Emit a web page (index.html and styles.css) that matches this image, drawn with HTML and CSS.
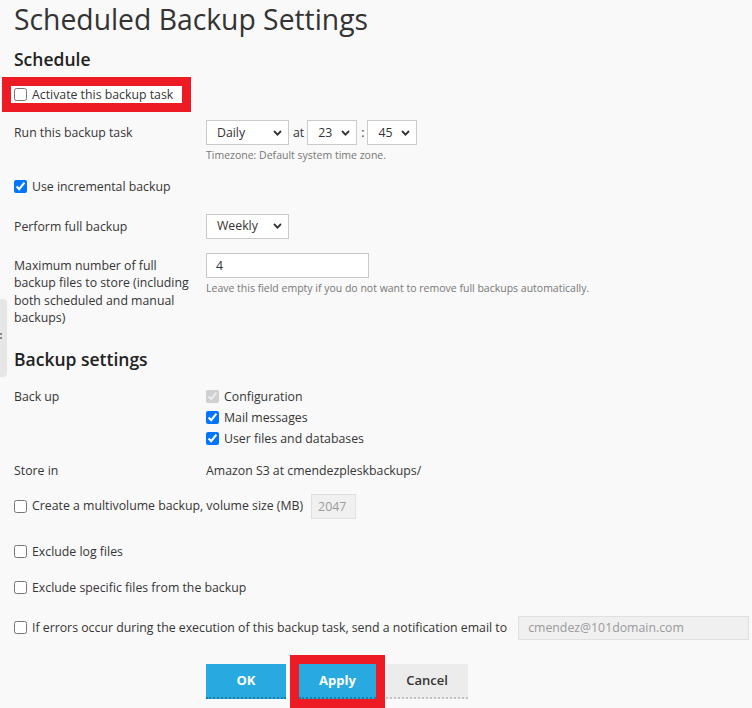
FILE: index.html
```html
<!DOCTYPE html>
<html>
<head>
<meta charset="utf-8">
<link rel="stylesheet" href="styles.css">
</head>
<body>
<div class="sidetab"><span class="dots"></span></div>
<h1 class="title">Scheduled Backup Settings</h1>

<h2 class="section">Schedule</h2>
<div class="activate-wrap">
  <label class="check activate"><input type="checkbox"><span>Activate this backup task</span></label>
</div>

<div class="row row-run">
  <div class="label pad">Run this backup task</div>
  <div class="field">
    <div class="inline">
      <span class="select w-daily"><span>Daily</span><svg width="9" height="6" viewBox="0 0 9 6"><path d="M1 1 L4.5 4.6 L8 1" fill="none" stroke="#333" stroke-width="1.8"/></svg></span>
      <span class="sep">at</span>
      <span class="select w-num"><span>23</span><svg width="9" height="6" viewBox="0 0 9 6"><path d="M1 1 L4.5 4.6 L8 1" fill="none" stroke="#333" stroke-width="1.8"/></svg></span>
      <span class="sep">:</span>
      <span class="select w-num"><span>45</span><svg width="9" height="6" viewBox="0 0 9 6"><path d="M1 1 L4.5 4.6 L8 1" fill="none" stroke="#333" stroke-width="1.8"/></svg></span>
    </div>
    <div class="hint">Timezone: Default system time zone.</div>
  </div>
</div>

<label class="check row-incr"><input type="checkbox" checked><span>Use incremental backup</span></label>

<div class="row row-full">
  <div class="label pad">Perform full backup</div>
  <div class="field">
    <span class="select w-daily"><span>Weekly</span><svg width="9" height="6" viewBox="0 0 9 6"><path d="M1 1 L4.5 4.6 L8 1" fill="none" stroke="#333" stroke-width="1.8"/></svg></span>
  </div>
</div>

<div class="row row-max">
  <div class="label pad">Maximum number of full backup files to store (including both scheduled and manual backups)</div>
  <div class="field">
    <div class="textbox w-max">4</div>
    <div class="hint">Leave this field empty if you do not want to remove full backups automatically.</div>
  </div>
</div>

<h2 class="section section-2">Backup settings</h2>

<div class="row row-backup">
  <div class="label tall">Back up</div>
  <div class="field">
    <label class="check tall"><input type="checkbox" checked disabled><span>Configuration</span></label>
    <label class="check tall"><input type="checkbox" checked><span>Mail messages</span></label>
    <label class="check tall"><input type="checkbox" checked><span>User files and databases</span></label>
  </div>
</div>

<div class="row row-store">
  <div class="label tall">Store in</div>
  <div class="field tall">Amazon S3 at cmendezpleskbackups/</div>
</div>

<div class="check-row row-multi">
  <label class="check"><input type="checkbox"><span>Create a multivolume backup, volume size (MB)</span></label>
  <div class="textbox disabled w-vol">2047</div>
</div>

<label class="check row-log"><input type="checkbox"><span>Exclude log files</span></label>

<label class="check row-spec"><input type="checkbox"><span>Exclude specific files from the backup</span></label>

<div class="check-row row-err">
  <label class="check"><input type="checkbox"><span>If errors occur during the execution of this backup task, send a notification email to</span></label>
  <div class="textbox disabled w-mail">cmendez@101domain.com</div>
</div>

<div class="buttons">
  <button class="btn primary ok">OK</button>
  <button class="btn primary apply">Apply</button>
  <button class="btn secondary">Cancel</button>
</div>
</body>
</html>
```
FILE: styles.css
```css
html, body {
  margin: 0;
  padding: 0;
}
body {
  background: #f9f9f9;
  color: #353535;
  font-family: "Open Sans", "Noto Sans", sans-serif;
  font-size: 12.3px;
  line-height: 17.5px;
  padding: 0 0 0 14px;
  height: 708px;
  overflow: hidden;
  position: relative;
}
.sidetab {
  position: absolute;
  left: 0;
  top: 299px;
  width: 7px;
  height: 78px;
  background: #e6e6e6;
  border-radius: 0 4px 4px 0;
}
.dots {
  position: absolute;
  left: 0;
  top: 34px;
  width: 2px;
  height: 8px;
  background: repeating-linear-gradient(to bottom, #888 0 2px, transparent 2px 4px);
}
.title {
  margin: 0;
  padding-top: 2px;
  font-size: 28.3px;
  line-height: 34px;
  font-weight: 400;
  color: #333;
}
.section {
  margin: 11px 0 0;
  font-size: 17.5px;
  line-height: 24px;
  font-weight: 600;
  color: #222;
}
.section-2 {
  margin-top: 20px;
}
.activate-wrap {
  margin-top: 15px;
  margin-left: -3px;
  height: 17px;
}
.check {
  display: flex;
  align-items: center;
  cursor: default;
  white-space: nowrap;
}
.check input {
  margin: 0 5px 0 0;
  width: 13px;
  height: 13px;
  flex: none;
}
.activate {
  display: inline-flex;
  height: 17px;
  background: #fff;
  padding: 0 9px 0 3px;
  box-shadow: 0 0 0 9px #ed1c24;
}
.row {
  display: grid;
  grid-template-columns: 182px 1fr;
  column-gap: 10px;
}
.label.pad {
  padding-top: 4px;
}
.inline {
  display: flex;
  align-items: center;
}
.sep {
  margin: 0 3px 0 4px;
}
.select {
  box-sizing: border-box;
  display: inline-flex;
  align-items: center;
  justify-content: space-between;
  height: 25px;
  border: 1px solid #cacaca;
  background: #fff;
  padding: 0 6px 0 10px;
  color: #333;
}
.w-daily { width: 83px; }
.w-num { width: 50px; }
.hint {
  margin-top: 3px;
  font-size: 10.5px;
  line-height: 15px;
  color: #777;
}
.row-run { margin-top: 17px; }
.row-incr { margin-top: 15px; }
.row-full { margin-top: 18px; }
.row-max { margin-top: 14px; }
.textbox {
  box-sizing: border-box;
  height: 25px;
  line-height: 23px;
  border: 1px solid #cacaca;
  background: #fff;
  padding: 0 9px;
  color: #333;
  flex: none;
}
.textbox.disabled {
  background: #f0f0f0;
  border-color: #e0e0e0;
  color: #9a9a9a;
}
.w-max { width: 163px; }
.w-vol { width: 45px; padding: 0 6px; margin-left: 8px; }
.w-mail { width: 231px; margin-left: 11px; height: 24px; line-height: 22px; }
.tall { line-height: 21px; }
.check.tall { height: 21px; }
.row-backup { margin-top: 15px; }
.row-store { margin-top: 11px; }
.check-row {
  display: flex;
  align-items: center;
}
.row-multi { margin-top: 13px; }
.row-log { margin-top: 24px; }
.row-spec { margin-top: 19px; }
.row-err { margin-top: 19px; }
.buttons {
  margin-top: 24px;
  padding-left: 192px;
  display: flex;
}
.btn {
  box-sizing: border-box;
  height: 35px;
  border: 0;
  font-family: "Open Sans", "Noto Sans", sans-serif;
  font-size: 13px;
  font-weight: 700;
  padding: 0;
  border-radius: 0;
}
.primary {
  background: #28a9e0;
  color: #fff;
  border-bottom: 2px dotted #1a7fab;
}
.secondary {
  background: #ececec;
  color: #333;
  font-weight: 600;
  border-bottom: 2px dotted #c2c2c2;
  width: 82px;
}
.ok { width: 80px; margin-right: 13px; }
.apply { width: 77px; margin-right: 10px; box-shadow: 0 0 0 9px #ed1c24; }
```
